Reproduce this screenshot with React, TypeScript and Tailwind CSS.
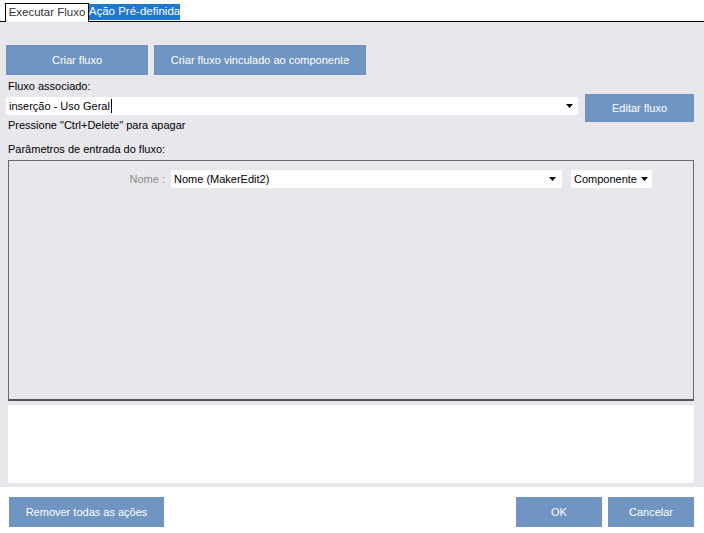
import React from "react";

function Arrow() {
  return (
    <svg width="8" height="5" viewBox="0 0 8 5" className="shrink-0">
      <path d="M0 0h7L3.5 4z" fill="#000" />
    </svg>
  );
}

const btn =
  "flex items-center justify-center bg-[#7195c2] text-white text-[11px] whitespace-nowrap";

export default function App() {
  return (
    <div
      className="w-[704px] h-[533px] flex flex-col bg-white text-[11px] text-black overflow-hidden"
      style={{ fontFamily: '"Liberation Sans", Arial, sans-serif' }}
    >
      {/* tabs */}
      <div className="h-[22px] flex items-end border-b border-black pl-[5px] bg-white shrink-0">
        <div className="h-[19px] w-[84px] border border-b-0 border-black bg-white flex items-center justify-center text-[#333] text-[11.5px] whitespace-nowrap -mb-px">
          Executar Fluxo
        </div>
        <div className="h-[16px] w-[91px] bg-[#1f78cf] text-white text-[11.5px] whitespace-nowrap flex items-center justify-center mb-px">
          Ação Pré-definida
        </div>
      </div>

      {/* main */}
      <div className="flex-1 bg-[#e8e7ec] flex flex-col pl-[6px] pr-[10px] pt-[23px] pb-[4px]">
        <div className="flex gap-[6px]">
          <div className={`${btn} w-[142px] h-[30px]`}>Criar fluxo</div>
          <div className={`${btn} w-[212px] h-[30px]`}>
            Criar fluxo vinculado ao componente
          </div>
        </div>
        <div className="mt-[3px] pl-[2px] h-[16px] flex items-center">Fluxo associado:</div>
        <div className="flex items-start gap-[7px]">
          <div className="flex-1 flex flex-col">
            <div className="mt-[3px] h-[18px] bg-white flex items-center pl-[3px] pr-[4px]">
              <span className="flex-1 flex items-center">
                inserção - Uso Geral
                <span className="inline-block w-px h-[14px] bg-black ml-px" />
              </span>
              <Arrow />
            </div>
            <div className="pl-[2px] h-[20px] flex items-center">
              Pressione "Ctrl+Delete" para apagar
            </div>
          </div>
          <div className={`${btn} w-[109px] h-[28px]`}>Editar fluxo</div>
        </div>
        <div className="mt-[5px] pl-[2px] h-[18px] flex items-center">
          Parâmetros de entrada do fluxo:
        </div>
        <div className="mt-[2px] ml-[2px] h-[241px] border border-[#6b6b70] border-b-2 border-b-[#55555a] flex items-start pt-[9px]">
          <div className="w-[162px] text-[#8a8a8a] pr-[6px] h-[18px] flex items-center justify-end">
            Nome :
          </div>
          <div className="w-[391px] h-[18px] bg-white flex items-center pl-[3px] pr-[5px]">
            <span className="flex-1">Nome (MakerEdit2)</span>
            <Arrow />
          </div>
          <div className="ml-[9px] w-[81px] h-[18px] bg-white flex items-center pl-[3px] pr-[3px]">
            <span className="flex-1 overflow-hidden whitespace-nowrap">Componente</span>
            <Arrow />
          </div>
        </div>
        <div className="ml-[2px] mt-[4px] h-[78px] bg-white" />
      </div>

      {/* bottom bar */}
      <div className="h-[46px] bg-white flex items-start pt-[10px] pl-[9px] pr-[10px] shrink-0">
        <div className={`${btn} w-[155px] h-[30px]`}>Remover todas as ações</div>
        <div className="flex-1" />
        <div className={`${btn} w-[86px] h-[30px]`}>OK</div>
        <div className={`${btn} w-[86px] h-[30px] ml-[6px]`}>Cancelar</div>
      </div>
    </div>
  );
}
